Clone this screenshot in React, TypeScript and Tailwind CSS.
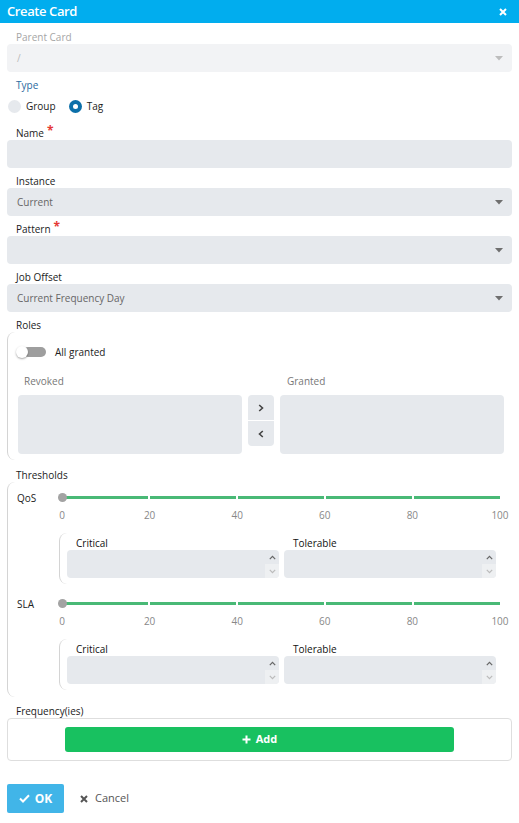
import React from 'react';

const font = { fontFamily: '"Open Sans", "Noto Sans", sans-serif' };

const label = 'block pl-[9px] text-[10px] leading-[12px] text-[#222] mb-[1px]';
const field = 'h-[28px] rounded-[4px] bg-[#e6e9ed] flex items-center pl-[10px] pr-[9px] text-[10px] text-[#666]';

function Caret({ light }: { light?: boolean }) {
  return (
    <svg width="8" height="5" viewBox="0 0 8 5" className="ml-auto">
      <path d="M0 0h8L4 4.5z" fill={light ? '#bdbdbd' : '#6f6f6f'} />
    </svg>
  );
}

function Required() {
  return <span className="text-[#e53935] text-[12px] font-bold ml-[3px] relative top-[-2px]">*</span>;
}

function SelectField({ title, value, required }: { title: string; value?: string; required?: boolean }) {
  return (
    <div className="mb-[7px]">
      <span className={label}>
        {title}
        {required && <Required />}
      </span>
      <div className={field}>
        <span>{value}</span>
        <Caret />
      </div>
    </div>
  );
}

function Spinner() {
  return (
    <div className="ml-auto flex flex-col h-full w-[14px]">
      <div className="flex-1 flex items-center justify-center">
        <svg width="7" height="5" viewBox="0 0 7 5">
          <path d="M0.8 4.2L3.5 1.3 6.2 4.2" fill="none" stroke="#666" strokeWidth="1.2" />
        </svg>
      </div>
      <div className="flex-1 flex items-center justify-center bg-[#eef0f2] rounded-br-[4px]">
        <svg width="7" height="5" viewBox="0 0 7 5">
          <path d="M0.8 0.8L3.5 3.7 6.2 0.8" fill="none" stroke="#bbb" strokeWidth="1.2" />
        </svg>
      </div>
    </div>
  );
}

function NumberBox({ title }: { title: string }) {
  return (
    <div className="flex-1">
      <span className="block pl-[9px] text-[10px] leading-[12px] text-[#111] mb-[1px]">{title}</span>
      <div className="h-[28px] rounded-[4px] bg-[#e6e9ed] flex">
        <Spinner />
      </div>
    </div>
  );
}

function Slider({ name }: { name: string }) {
  const ticks = ['0', '20', '40', '60', '80', '100'];
  return (
    <div>
      <div className="flex items-start">
        <span className="w-[54px] pl-[9px] text-[10px] leading-[12px] text-[#222] pt-[1px]">{name}</span>
        <div className="flex-1 mr-[12px]">
          <div className="relative h-[12px] flex items-center">
            <div className="flex w-full gap-[2px]">
              <div className="flex-1 h-[3px] bg-[#49b976]" />
              <div className="flex-1 h-[3px] bg-[#49b976]" />
              <div className="flex-1 h-[3px] bg-[#49b976]" />
              <div className="flex-1 h-[3px] bg-[#49b976]" />
              <div className="flex-1 h-[3px] bg-[#49b976]" />
            </div>
            <div className="absolute left-[-4px] top-[1.5px] w-[9px] h-[9px] rounded-full bg-[#a3a3a3]" />
          </div>
          <div className="flex justify-between mt-[6px] text-[10px] leading-[12px] text-[#888]">
            {ticks.map((t) => (
              <span key={t} className="w-0 flex justify-center whitespace-nowrap">{t}</span>
            ))}
          </div>
        </div>
      </div>
      <div className="ml-[51px] mr-[16px] mt-[12px] border-l border-[#d4d4d4] rounded-l-[8px] pl-[7px] pt-[4px] pb-[6px] flex gap-[5px]">
        <NumberBox title="Critical" />
        <NumberBox title="Tolerable" />
      </div>
    </div>
  );
}

export default function App() {
  return (
    <div className="w-[519px] h-[823px] bg-white" style={font}>
      <div className="h-[23px] bg-[#01adee] flex items-center justify-between pl-[7px] pr-[12px]">
        <span className="text-white text-[13px] font-semibold tracking-[-0.4px]">Create Card</span>
        <svg width="8" height="8" viewBox="0 0 8 8">
          <path d="M1 1l6 6M7 1L1 7" stroke="#fff" strokeWidth="2" />
        </svg>
      </div>

      <div className="px-[7px] pt-[8px]">
        <div className="mb-[7px]">
          <span className={`${label} text-[#a6a6a6]`}>Parent Card</span>
          <div className="h-[28px] rounded-[4px] bg-[#f2f3f5] flex items-center pl-[10px] pr-[9px] text-[10px] text-[#bbb]">
            <span>/</span>
            <Caret light />
          </div>
        </div>

        <span className="block pl-[9px] text-[10px] leading-[12px] text-[#2c6aa0]">Type</span>
        <div className="flex items-center h-[14px] mt-[8px] mb-[14px] text-[10px] text-[#222]">
          <span className="w-[13px] h-[13px] rounded-full bg-[#e6e9ed] ml-[1px]" />
          <span className="ml-[5px]">Group</span>
          <span className="w-[13px] h-[13px] rounded-full bg-[#0b6fa9] ml-[13px] flex items-center justify-center">
            <span className="w-[5px] h-[5px] rounded-full bg-white" />
          </span>
          <span className="ml-[5px]">Tag</span>
        </div>

        <div className="mb-[7px]">
          <span className={label}>
            Name
            <Required />
          </span>
          <div className={field} />
        </div>
        <SelectField title="Instance" value="Current" />
        <SelectField title="Pattern" required />
        <SelectField title="Job Offset" value="Current Frequency Day" />

        <span className="block pl-[9px] text-[10px] leading-[12px] text-[#222] mt-[6px]">Roles</span>
        <div className="border-l border-[#d4d4d4] rounded-l-[8px] mt-[1px] pt-[14px] pb-[6px]">
          <div className="flex items-center h-[12px] pl-[8px]">
            <div className="relative w-[30px] h-[12px] flex items-center">
              <div className="ml-[7px] w-[23px] h-[10px] rounded-full bg-[#9e9e9e]" />
              <div className="absolute left-0 top-0 w-[12px] h-[12px] rounded-full bg-white shadow-[0_1px_2px_rgba(0,0,0,0.35)]" />
            </div>
            <span className="ml-[9px] text-[10px] text-[#222]">All granted</span>
          </div>
          <div className="flex gap-[6px] mt-[17px] pl-[10px] pr-[8px]">
            <div className="flex-1">
              <span className="block pl-[6px] text-[10px] leading-[12px] text-[#777] mb-[8px]">Revoked</span>
              <div className="h-[59px] rounded-[4px] bg-[#e6e9ed]" />
            </div>
            <div className="w-[26px] pt-[20px] flex flex-col gap-[1px]">
              <div className="h-[25px] rounded-t-[4px] bg-[#e6e9ed] flex items-center justify-center">
                <svg width="6" height="8" viewBox="0 0 6 8">
                  <path d="M1.2 1L4.5 4 1.2 7" fill="none" stroke="#444" strokeWidth="1.6" />
                </svg>
              </div>
              <div className="h-[25px] rounded-b-[4px] bg-[#e6e9ed] flex items-center justify-center">
                <svg width="6" height="8" viewBox="0 0 6 8">
                  <path d="M4.8 1L1.5 4 4.8 7" fill="none" stroke="#444" strokeWidth="1.6" />
                </svg>
              </div>
            </div>
            <div className="flex-1">
              <span className="block pl-[7px] text-[10px] leading-[12px] text-[#777] mb-[8px]">Granted</span>
              <div className="h-[59px] rounded-[4px] bg-[#e6e9ed]" />
            </div>
          </div>
        </div>

        <span className="block pl-[9px] text-[10px] leading-[12px] text-[#222] mt-[9px]">Thresholds</span>
        <div className="border-l border-[#d4d4d4] rounded-l-[8px] mt-[1px] pt-[9px] pb-[7px]">
          <Slider name="QoS" />
          <div className="h-[13px]" />
          <Slider name="SLA" />
        </div>

        <span className="block pl-[9px] text-[10px] leading-[12px] text-[#222] mt-[8px]">Frequency(ies)</span>
        <div className="mt-[1px] border border-[#dedede] rounded-[4px] h-[43px] pt-[8px] px-[57px]">
          <div className="h-[25px] rounded-[3px] bg-[#18c160] flex items-center justify-center text-white text-[11px] font-bold">
            <svg width="9" height="9" viewBox="0 0 9 9" className="mr-[5px]">
              <path d="M4.5 0.5v8M0.5 4.5h8" stroke="#fff" strokeWidth="2" />
            </svg>
            Add
          </div>
        </div>

        <div className="flex items-center mt-[23px]">
          <div className="w-[57px] h-[29px] rounded-[2px] bg-[#41b5e8] flex items-center justify-center text-white text-[12px] font-bold">
            <svg width="11" height="9" viewBox="0 0 11 9" className="mr-[5px]">
              <path d="M1 4.5L4 7.5 10 1.2" fill="none" stroke="#fff" strokeWidth="2" />
            </svg>
            OK
          </div>
          <div className="ml-[16px] flex items-center text-[11px] text-[#555]">
            <svg width="8" height="8" viewBox="0 0 8 8" className="mr-[7px]">
              <path d="M1 1l6 6M7 1L1 7" stroke="#555" strokeWidth="2" />
            </svg>
            Cancel
          </div>
        </div>
      </div>
    </div>
  );
}
